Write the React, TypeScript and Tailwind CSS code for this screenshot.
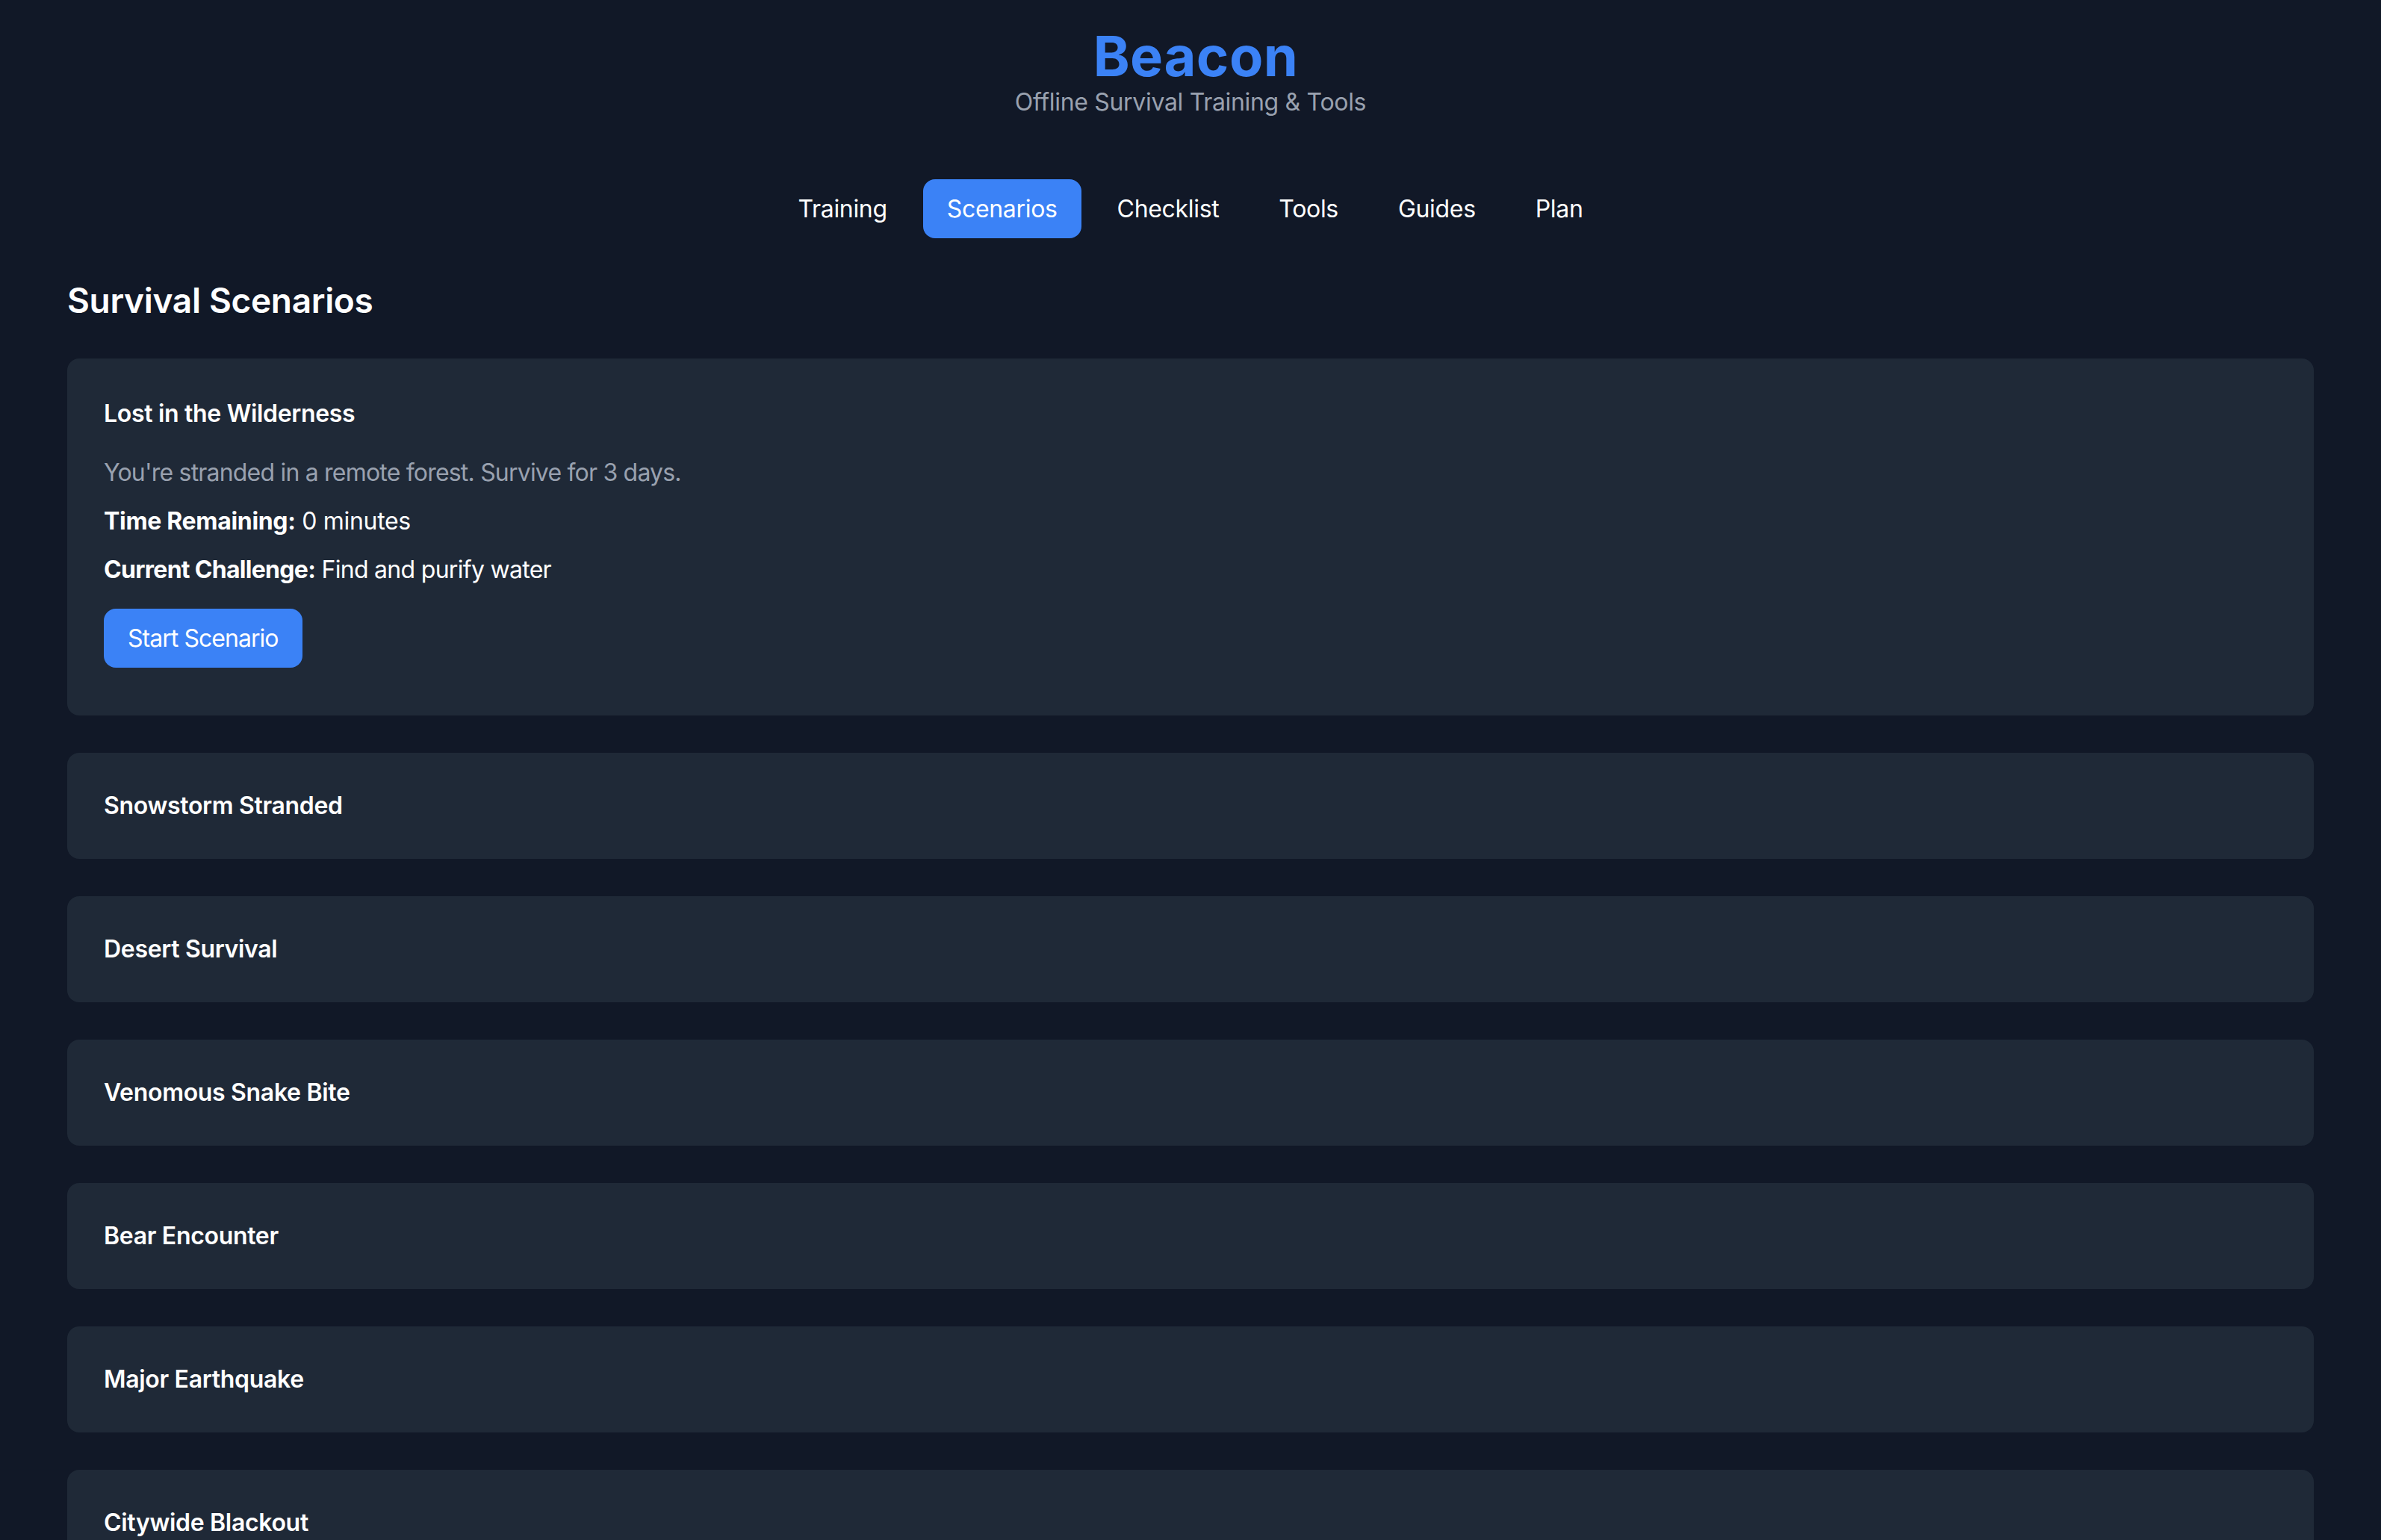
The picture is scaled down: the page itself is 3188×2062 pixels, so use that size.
import React, { JSX } from "react";

const tabs = ["Training", "Scenarios", "Checklist", "Tools", "Guides", "Plan"];

const others = [
  "Snowstorm Stranded",
  "Desert Survival",
  "Venomous Snake Bite",
  "Bear Encounter",
  "Major Earthquake",
  "Citywide Blackout",
];

export default function App(): JSX.Element {
  return (
    <div className="min-h-screen bg-[#111827] text-gray-100 font-['Inter',sans-serif] tracking-[-0.02em] px-[90px] pb-[100px]">
      <header className="flex flex-col items-center">
        <h1 className="mt-[35px] text-[74px] leading-[80px] font-bold text-[#3b82f6] tracking-[0.5px] pl-[14px]">
          Beacon
        </h1>
        <p className="text-[32px] leading-[44px] text-gray-400">
          Offline Survival Training &amp; Tools
        </p>
      </header>

      <nav className="mt-[81px] flex justify-center gap-[16px]">
        {tabs.map((t) => (
          <button
            key={t}
            className={
              t === "Scenarios"
                ? "px-[32px] h-[79px] rounded-[16px] text-[32px] bg-[#3b82f6] text-white"
                : "px-[32px] h-[79px] rounded-[16px] text-[32px] text-white"
            }
          >
            {t}
          </button>
        ))}
      </nav>

      <h2 className="mt-[51px] text-[46px] leading-[64px] font-semibold text-white">
        Survival Scenarios
      </h2>

      <div className="mt-[46px] flex flex-col gap-[50px]">
        <div className="bg-[#1f2937] rounded-[16px] px-[49px] pt-[49px] pb-[64px]">
          <h3 className="text-[32px] leading-[49px] font-semibold text-white">
            Lost in the Wilderness
          </h3>
          <p className="mt-[30px] text-[32px] leading-[49px] text-gray-400 tracking-[-0.025em]">
            You're stranded in a remote forest. Survive for 3 days.
          </p>
          <p className="mt-[16px] text-[32px] leading-[49px] text-white">
            <span className="font-bold">Time Remaining:</span> 0 minutes
          </p>
          <p className="mt-[16px] text-[32px] leading-[49px] text-white tracking-[-0.022em]">
            <span className="font-bold">Current Challenge:</span> Find and purify water
          </p>
          <button className="mt-[28px] h-[79px] px-[32px] rounded-[16px] bg-[#3b82f6] text-white text-[32px] tracking-[-0.03em]">
            Start Scenario
          </button>
        </div>

        {others.map((s) => (
          <div key={s} className="bg-[#1f2937] rounded-[16px] px-[49px] py-[49px]">
            <h3 className="text-[32px] leading-[44px] font-semibold text-white">{s}</h3>
          </div>
        ))}
      </div>
    </div>
  );
}
